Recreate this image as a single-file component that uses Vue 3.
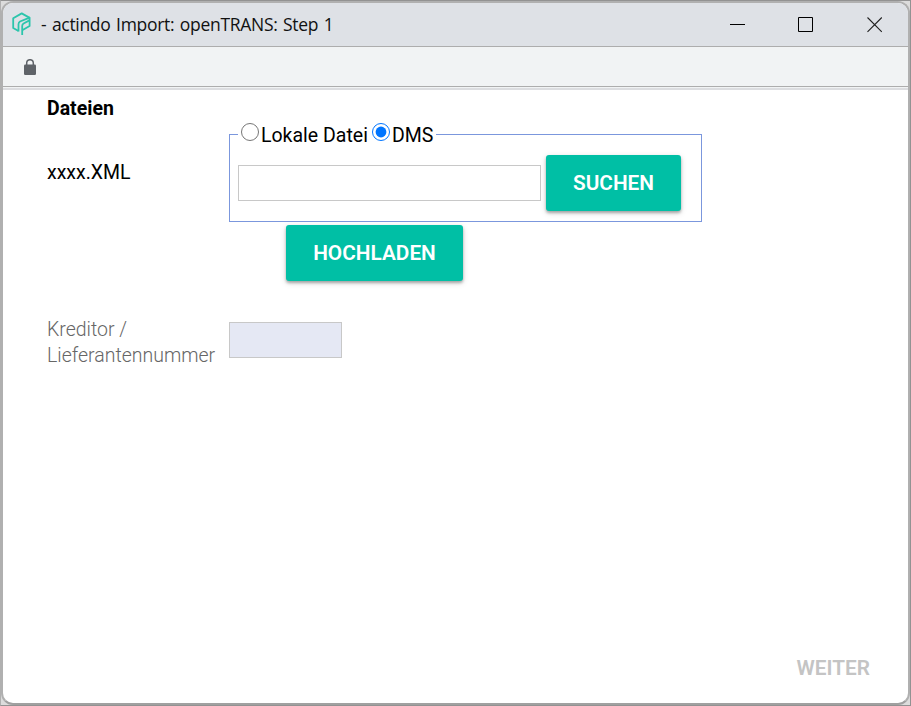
<script setup>
import { ref } from 'vue'

const source = ref('dms')
const file = ref('')
const creditor = ref('')
</script>

<template>
  <div class="desktop">
    <div class="window">
      <header class="titlebar">
        <svg class="logo" width="20" height="24" viewBox="0 0 20 24" fill="none" stroke="#2cc5ac" stroke-width="1.8" stroke-linejoin="round">
          <path d="M6.500 19 1.200 16V6.300L9.700 1.400l7.600 4.200" />
          <path d="M6.500 19.500V12.200q0-1.800 1.500-2.700L17.600 5.600V14L10.200 18.300" />
          <path d="M10.200 23V14q0-1.700 1.400-2.500L17.400 8.400" />
        </svg>
        <h1 class="title">- actindo Import: openTRANS: Step 1</h1>
        <div class="controls">
          <svg class="minimize" width="16" height="16" viewBox="0 0 16 16" stroke="#000"><path d="M0 7.500H15" /></svg>
          <svg width="16" height="16" viewBox="0 0 16 16" stroke="#000" fill="none"><path d="M.5.500H14.500V14.500H.5Z" /></svg>
          <svg class="close" width="16" height="16" viewBox="0 0 16 16" stroke="#222" stroke-width="1.100"><path d="M.5.500 14.800 14.800M14.800.500.500 14.800" /></svg>
        </div>
      </header>
      <div class="addressbar">
        <svg width="12" height="16" viewBox="0 0 12 16">
          <path d="M2.700 6V4a3.300 3.300 0 0 1 6.600 0v2" fill="none" stroke="#5f6368" stroke-width="1.500" />
          <rect y="5.500" width="12" height="10.500" rx="1.300" fill="#5f6368" />
        </svg>
      </div>
      <main class="page">
        <h2 class="heading">Dateien</h2>
        <div class="row files">
          <div class="label filename">xxxx.XML</div>
          <div class="upload">
            <fieldset class="source">
              <legend>
                <input v-model="source" type="radio" value="local" name="source" id="local"><label for="local" class="local">Lokale Datei</label>
                <input v-model="source" type="radio" value="dms" name="source" id="dms"><label for="dms" class="dms">DMS</label>
              </legend>
              <div class="search">
                <input v-model="file" class="field" type="text">
                <button class="btn suchen">SUCHEN</button>
              </div>
            </fieldset>
            <button class="btn hochladen">HOCHLADEN</button>
          </div>
        </div>
        <div class="row creditor">
          <div class="label muted">Kreditor /<br>Lieferantennummer</div>
          <input v-model="creditor" class="field number" type="text">
        </div>
        <footer class="actions"><button class="next" disabled>WEITER</button></footer>
      </main>
    </div>
  </div>
</template>

<style>
body { margin: 0; overflow: hidden; }
</style>

<style scoped>
* { box-sizing: border-box; }
.desktop {
  width: 911px;
  height: 706px;
  background: #dcdcdc;
  border: 1px solid #929292;
  border-left-color: #b0b0b0;
  font-family: Roboto, sans-serif;
  font-size: 19.500px;
}
.window {
  width: 909px;
  height: 704px;
  border: 2px solid #b0b0b0;
  border-bottom-color: #a0a0a0;
  border-radius: 12px;
  overflow: hidden;
  background: #fff;
  display: flex;
  flex-direction: column;
}
.titlebar {
  height: 44px;
  flex: none;
  background: #dee1e6;
  border-bottom: 1px solid #adadad;
  display: flex;
  align-items: flex-start;
  padding-left: 9px;
}
.logo { margin-top: 9px; flex: none; }
.title {
  margin: 9px 0 0 9px;
  font: 400 17.500px/25px "Open Sans", sans-serif;
  letter-spacing: -.3px;
  word-spacing: 1.300px;
  color: #111;
  white-space: nowrap;
}
.controls {
  margin: 14px 25px 0 auto;
  display: flex;
  gap: 52px;
}
.controls svg { margin-left: -1px; }
.controls .minimize { margin-right: 1px; }
.controls .close { margin-left: 1px; }
.addressbar {
  height: 43px;
  flex: none;
  background: #f1f3f4;
  border-bottom: 2px solid #dcdde0;
  box-shadow: inset 0 -1px #f1f3f4, inset 0 -2px #adadad;
  padding: 12px 0 0 21px;
}
.addressbar svg { display: block; }
.page {
  flex: 1;
  display: flex;
  flex-direction: column;
  padding: 6px 38px 20px 44px;
}
.heading {
  margin: 0;
  font-size: 19.500px;
  line-height: 26px;
  font-weight: 700;
}
.row {
  display: grid;
  grid-template-columns: 182px 1fr;
}
.files { margin-top: -1px; }
.label { line-height: 26px; }
.filename { padding-top: 39px; }
.source {
  margin: 0;
  width: 473px;
  height: 101px;
  border: 1px solid #7b97dd;
  padding: 0 8px;
}
legend {
  display: flex;
  align-items: flex-start;
  height: 26px;
  padding: 0 3px;
  line-height: 26px;
  white-space: nowrap;
}
legend input {
  width: 18px;
  height: 18px;
  margin: 2px 2px 0 0;
}
.local { margin-right: 4px; }
legend label { padding-top: 2px; }
.search {
  display: flex;
  align-items: center;
  gap: 5px;
  padding-top: 8px;
}
.field {
  width: 303px;
  height: 36px;
  border: 1px solid #c8c8c8;
  background: #fff;
  padding: 0 6px;
  outline: none;
  font: inherit;
}
.btn {
  display: block;
  height: 56px;
  border: 0;
  border-radius: 3px;
  background: #00bfa5;
  color: #fff;
  font: 600 20.800px/56px Roboto, sans-serif;
  padding: 0;
  box-shadow: 0 2px 3px rgba(0, 0, 0, .3), 0 2px 7px rgba(0, 0, 0, .12);
}
.suchen { width: 135px; }
.hochladen { width: 177px; margin: 3px 0 0 57px; }
.creditor { margin-top: 35px; }
.muted { padding-top: 1px; color: #666; font-weight: 300; }
.number {
  width: 113px;
  margin-top: 6px;
  background: #e5e8f4;
}
.actions {
  margin-top: auto;
  display: flex;
  justify-content: flex-end;
}
.next {
  border: 0;
  background: none;
  padding: 0;
  color: #c4c4c4;
  font: 600 20.800px/30px Roboto, sans-serif;
}
</style>
